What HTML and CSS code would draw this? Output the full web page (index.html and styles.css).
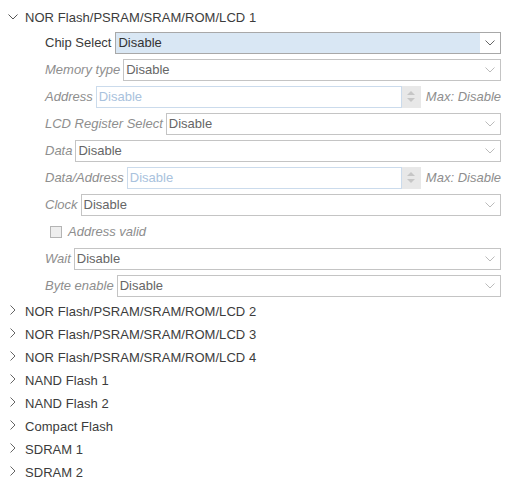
FILE: index.html
```html
<!DOCTYPE html>
<html>
<head>
<meta charset="utf-8">
<link rel="stylesheet" href="styles.css">
</head>
<body>
<div class="tree">
  <div class="node-head">
    <svg class="chev-down" width="10" height="6" viewBox="0 0 10 6"><polyline points="0.5,0.5 5,5 9.5,0.5" fill="none" stroke="#555" stroke-width="1"/></svg>
    <span>NOR Flash/PSRAM/SRAM/ROM/LCD 1</span>
  </div>
  <div class="props">
    <div class="prop">
      <span class="lbl on">Chip Select</span>
      <div class="select active"><span class="val">Disable</span><span class="btn"><svg width="10" height="6" viewBox="0 0 10 6"><polyline points="0.5,0.5 5,5 9.5,0.5" fill="none" stroke="#666" stroke-width="1"/></svg></span></div>
    </div>
    <div class="prop">
      <span class="lbl">Memory type</span>
      <div class="select"><span class="val">Disable</span><span class="btn"><svg width="10" height="6" viewBox="0 0 10 6"><polyline points="0.5,0.5 5,5 9.5,0.5" fill="none" stroke="#bbb" stroke-width="1"/></svg></span></div>
    </div>
    <div class="prop">
      <span class="lbl">Address</span>
      <div class="input"><span class="val">Disable</span></div>
      <div class="spin"><span class="up"></span><span class="down"></span></div>
      <span class="max">Max: Disable</span>
    </div>
    <div class="prop">
      <span class="lbl">LCD Register Select</span>
      <div class="select"><span class="val">Disable</span><span class="btn"><svg width="10" height="6" viewBox="0 0 10 6"><polyline points="0.5,0.5 5,5 9.5,0.5" fill="none" stroke="#bbb" stroke-width="1"/></svg></span></div>
    </div>
    <div class="prop">
      <span class="lbl">Data</span>
      <div class="select"><span class="val">Disable</span><span class="btn"><svg width="10" height="6" viewBox="0 0 10 6"><polyline points="0.5,0.5 5,5 9.5,0.5" fill="none" stroke="#bbb" stroke-width="1"/></svg></span></div>
    </div>
    <div class="prop">
      <span class="lbl">Data/Address</span>
      <div class="input"><span class="val">Disable</span></div>
      <div class="spin"><span class="up"></span><span class="down"></span></div>
      <span class="max">Max: Disable</span>
    </div>
    <div class="prop">
      <span class="lbl">Clock</span>
      <div class="select"><span class="val">Disable</span><span class="btn"><svg width="10" height="6" viewBox="0 0 10 6"><polyline points="0.5,0.5 5,5 9.5,0.5" fill="none" stroke="#bbb" stroke-width="1"/></svg></span></div>
    </div>
    <div class="prop check">
      <span class="box"></span>
      <span class="lbl">Address valid</span>
    </div>
    <div class="prop">
      <span class="lbl">Wait</span>
      <div class="select"><span class="val">Disable</span><span class="btn"><svg width="10" height="6" viewBox="0 0 10 6"><polyline points="0.5,0.5 5,5 9.5,0.5" fill="none" stroke="#bbb" stroke-width="1"/></svg></span></div>
    </div>
    <div class="prop">
      <span class="lbl">Byte enable</span>
      <div class="select"><span class="val">Disable</span><span class="btn"><svg width="10" height="6" viewBox="0 0 10 6"><polyline points="0.5,0.5 5,5 9.5,0.5" fill="none" stroke="#bbb" stroke-width="1"/></svg></span></div>
    </div>
  </div>
  <div class="node-head closed"><svg class="chev-right" width="6" height="10" viewBox="0 0 6 10"><polyline points="0.5,0.5 5,5 0.5,9.5" fill="none" stroke="#666" stroke-width="1"/></svg><span>NOR Flash/PSRAM/SRAM/ROM/LCD 2</span></div>
  <div class="node-head closed"><svg class="chev-right" width="6" height="10" viewBox="0 0 6 10"><polyline points="0.5,0.5 5,5 0.5,9.5" fill="none" stroke="#666" stroke-width="1"/></svg><span>NOR Flash/PSRAM/SRAM/ROM/LCD 3</span></div>
  <div class="node-head closed"><svg class="chev-right" width="6" height="10" viewBox="0 0 6 10"><polyline points="0.5,0.5 5,5 0.5,9.5" fill="none" stroke="#666" stroke-width="1"/></svg><span>NOR Flash/PSRAM/SRAM/ROM/LCD 4</span></div>
  <div class="node-head closed"><svg class="chev-right" width="6" height="10" viewBox="0 0 6 10"><polyline points="0.5,0.5 5,5 0.5,9.5" fill="none" stroke="#666" stroke-width="1"/></svg><span>NAND Flash 1</span></div>
  <div class="node-head closed"><svg class="chev-right" width="6" height="10" viewBox="0 0 6 10"><polyline points="0.5,0.5 5,5 0.5,9.5" fill="none" stroke="#666" stroke-width="1"/></svg><span>NAND Flash 2</span></div>
  <div class="node-head closed"><svg class="chev-right" width="6" height="10" viewBox="0 0 6 10"><polyline points="0.5,0.5 5,5 0.5,9.5" fill="none" stroke="#666" stroke-width="1"/></svg><span>Compact Flash</span></div>
  <div class="node-head closed"><svg class="chev-right" width="6" height="10" viewBox="0 0 6 10"><polyline points="0.5,0.5 5,5 0.5,9.5" fill="none" stroke="#666" stroke-width="1"/></svg><span>SDRAM 1</span></div>
  <div class="node-head closed"><svg class="chev-right" width="6" height="10" viewBox="0 0 6 10"><polyline points="0.5,0.5 5,5 0.5,9.5" fill="none" stroke="#666" stroke-width="1"/></svg><span>SDRAM 2</span></div>
</div>
</body>
</html>
```

FILE: styles.css
```css
html, body {
  margin: 0;
  padding: 0;
  background: #fff;
}
body {
  font-family: "Liberation Sans", Arial, sans-serif;
  font-size: 13px;
  color: #3c3c3c;
}
.tree {
  padding-top: 6px;
  width: 525px;
}
.node-head {
  height: 23px;
  display: flex;
  align-items: center;
  padding-left: 8px;
  color: #3c3c3c;
  letter-spacing: 0.05px;
}
.node-head .chev-down {
  margin-right: 7px;
  margin-top: -2px;
}
.node-head.closed {
  padding-left: 10px;
}
.node-head .chev-right {
  margin-right: 9px;
  margin-top: -4px;
}
.props {
  display: flex;
  flex-direction: column;
  margin-bottom: 1px;
}
.prop {
  height: 27px;
  display: flex;
  align-items: center;
  padding-left: 45px;
  padding-right: 24px;
}
.lbl {
  font-style: italic;
  color: #8e8e8e;
  margin-right: 3px;
  white-space: nowrap;
}
.lbl.on {
  font-style: normal;
  color: #3a3a3a;
  margin-right: 4px;
}
.select {
  flex: 1;
  height: 22px;
  box-sizing: border-box;
  border: 1px solid #c4c4c4;
  background: #fff;
  display: flex;
  align-items: center;
}
.select .val {
  flex: 1;
  padding-left: 2px;
  color: #666;
}
.select .btn {
  width: 20px;
  height: 100%;
  display: flex;
  align-items: center;
  justify-content: center;
  background: #fff;
}
.select.active {
  border-color: #a8a8a8;
  background: #d9e7f4;
}
.select.active .val {
  color: #333;
}
.input {
  flex: 1;
  height: 22px;
  box-sizing: border-box;
  border: 1px solid #cbdbec;
  display: flex;
  align-items: center;
}
.input .val {
  padding-left: 2px;
  color: #a9c2dd;
}
.spin {
  width: 19px;
  height: 22px;
  background: #e8e8e8;
  display: flex;
  flex-direction: column;
  align-items: center;
  justify-content: center;
  gap: 3px;
}
.spin .up {
  width: 0;
  height: 0;
  border-left: 4px solid transparent;
  border-right: 4px solid transparent;
  border-bottom: 4px solid #c6c6c6;
}
.spin .down {
  width: 0;
  height: 0;
  border-left: 4px solid transparent;
  border-right: 4px solid transparent;
  border-top: 4px solid #c6c6c6;
}
.max {
  margin-left: 5px;
  font-style: italic;
  color: #8e8e8e;
  white-space: nowrap;
}
.prop.check {
  padding-left: 50px;
}
.check .box {
  width: 10px;
  height: 10px;
  border: 1px solid #b4b4b4;
  background: #eeeeee;
  margin-right: 6px;
}
```
